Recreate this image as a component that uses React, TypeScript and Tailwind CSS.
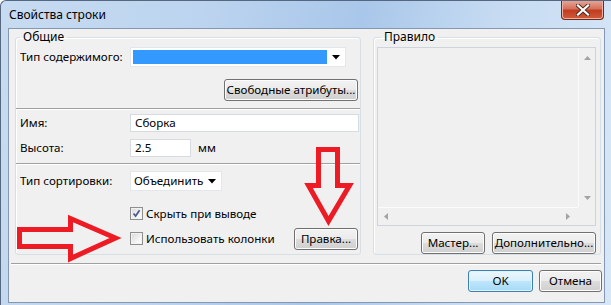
import React from 'react';

function Button({ children, w, primary }: { children: React.ReactNode; w: string; primary?: boolean }) {
  const look = primary
    ? 'border-[#3c7fb1] bg-[linear-gradient(#eaf6fd,#d9f0fc_50%,#bee6fd_50%,#a7d9f5)] shadow-[inset_0_0_0_1px_#e4f3fb]'
    : 'border-[#707070] bg-[linear-gradient(#f2f2f2,#ebebeb_50%,#dddddd_50%,#cfcfcf)] shadow-[inset_0_0_0_1px_#fcfcfc]';
  return (
    <button className={`h-[22px] ${w} shrink-0 whitespace-nowrap rounded-[3px] border ${look} text-[11.6px] leading-none text-black`}>
      {children}
    </button>
  );
}

function DropArrow() {
  return (
    <svg width="8" height="5" viewBox="0 0 8 5">
      <path d="M0 0 H8 L4 4.5 Z" fill="#000" />
    </svg>
  );
}

function Tri({ dir }: { dir: 'up' | 'down' | 'left' | 'right' }) {
  const d = {
    up: 'M0 4 L3.5 0 L7 4 Z',
    down: 'M0 0 H7 L3.5 4 Z',
    left: 'M4 0 V7 L0 3.5 Z',
    right: 'M0 0 V7 L4 3.5 Z',
  }[dir];
  const vertical = dir === 'up' || dir === 'down';
  return (
    <svg width={vertical ? 7 : 4} height={vertical ? 4 : 7} viewBox={vertical ? '0 0 7 4' : '0 0 4 7'}>
      <path d={d} fill="#a3a3a3" />
    </svg>
  );
}

function Checkbox({ checked, label }: { checked?: boolean; label: string }) {
  return (
    <div className="flex items-center gap-[3px]">
      <span className="flex h-[13px] w-[13px] items-center justify-center border border-[#8e8f8f] bg-[linear-gradient(135deg,#d8d8d8,#f7f7f7_70%,#ffffff)] shadow-[inset_0_0_0_1px_#f2f2f2]">
        {checked && (
          <svg width="9" height="9" viewBox="0 0 9 9">
            <path d="M1.5 4.5 L3.6 7 L7.6 1.2" fill="none" stroke="#4a5f8e" strokeWidth="1.8" />
          </svg>
        )}
      </span>
      <span>{label}</span>
    </div>
  );
}

function Separator({ className = '' }: { className?: string }) {
  return <div className={`h-[2px] border-t border-b border-t-[#a0a0a0] border-b-[#ffffff] ${className}`} />;
}

function Input({ value, w }: { value: string; w: string }) {
  return (
    <div className={`flex h-[18px] ${w} items-center border border-[#d6dbe1] bg-white pl-[4px]`}>{value}</div>
  );
}

export default function App() {
  return (
    <div className="relative flex h-[305px] w-[611px] flex-col overflow-hidden rounded-tl-[6px] border-l border-t border-[#55687f] bg-[linear-gradient(100deg,#c7dbf1_0%,#bcd4ef_30%,#a9c7ea_55%,#c6dbf2_75%,#d7e7f7_100%)] pb-[2px] pl-[7px] pr-[6px] font-['Noto_Sans',sans-serif] text-[11.6px] text-black">
      {/* title bar */}
      <div className="flex h-[27px] shrink-0 items-start justify-between">
        <span className="mt-[6px] pl-[1px] text-[12px] leading-[16px]">Свойства строки</span>
        <button className="mr-[1px] mt-[-1px] flex h-[20px] w-[43px] items-center justify-center rounded-b-[4px] border border-t-0 border-[#6e2a1d] bg-[linear-gradient(#e9a99a,#d4735d_45%,#c23c1f_55%,#cf5a3c)] shadow-[inset_0_0_0_1px_#eeb0a2]">
          <svg width="14" height="12" viewBox="0 0 14 12">
            <path d="M2 1.5 L12 10.5 M12 1.5 L2 10.5" stroke="#4b2a22" strokeWidth="4" strokeLinecap="square" />
            <path d="M2 1.5 L12 10.5 M12 1.5 L2 10.5" stroke="#ffffff" strokeWidth="2.2" strokeLinecap="square" />
          </svg>
        </button>
      </div>

      {/* client area */}
      <div className="flex flex-1 flex-col border border-[#8499b1] bg-[#f0f0f0]">
        <div className="ml-[6px] flex items-stretch gap-[12px]">
          <fieldset className="w-[346px] rounded-[3px] border border-[#d5dfe5] pb-[4px] shadow-[inset_1px_1px_0_#ffffff]">
            <legend className="ml-[4px] px-[3px] text-[12px] leading-[16px]">Общие</legend>
            <div className="mt-[2px] flex h-[20px] items-center pl-[4px]">
              <span className="w-[110px]">Тип содержимого:</span>
              <div className="flex h-[20px] w-[216px] items-center border border-[#e3e6ea] bg-white pl-[2px] pr-[5px]">
                <div className="h-[14px] w-[194px] bg-[#3399ff]" />
                <div className="ml-auto flex">
                  <DropArrow />
                </div>
              </div>
            </div>
            <div className="mt-[12px] flex justify-end pr-[2px]">
              <Button w="w-[134px]">Свободные атрибуты...</Button>
            </div>
            <Separator className="mt-[7px]" />
            <div className="mt-[4px] flex h-[18px] items-center pl-[4px]">
              <span className="w-[110px]">Имя:</span>
              <Input value="Сборка" w="w-[229px]" />
            </div>
            <div className="mt-[7px] flex h-[18px] items-center pl-[4px]">
              <span className="w-[110px]">Высота:</span>
              <Input value="2.5" w="w-[61px]" />
              <span className="ml-[7px]">мм</span>
            </div>
            <Separator className="mt-[6px]" />
            <div className="mt-[6px] flex h-[20px] items-center pl-[4px]">
              <span className="w-[110px]">Тип сортировки:</span>
              <div className="flex h-[20px] w-[92px] items-center border border-[#e3e6ea] bg-white pl-[3px] pr-[5px]">
                <span>Объединить</span>
                <div className="ml-auto flex">
                  <DropArrow />
                </div>
              </div>
            </div>
            <div className="mt-[16px] flex h-[13px] items-center pl-[114px]">
              <Checkbox checked label="Скрыть при выводе" />
            </div>
            <div className="mt-[8px] flex h-[22px] items-center justify-between pl-[114px] pr-[2px]">
              <Checkbox label="Использовать колонки" />
              <Button w="w-[64px]">Правка...</Button>
            </div>
          </fieldset>

          <fieldset className="flex w-[228px] flex-col rounded-[3px] border border-[#d5dfe5] pl-[3px] pr-[4px] shadow-[inset_1px_1px_0_#ffffff]">
            <legend className="ml-[4px] px-[3px] text-[12px] leading-[16px]">Правило</legend>
            <div className="mt-[2px] grid h-[179px] grid-cols-[1fr_17px] grid-rows-[1fr_18px] border border-[#cdd4dc] bg-[#f0f0f0]">
              <div />
              <div className="flex flex-col items-center justify-between border-l border-[#fbfbfb] pb-[7px] pt-[8px]">
                <Tri dir="up" />
                <Tri dir="down" />
              </div>
              <div className="flex items-center justify-between border-t border-[#fbfbfb] pl-[6px] pr-[8px]">
                <Tri dir="left" />
                <Tri dir="right" />
              </div>
              <div />
            </div>
            <div className="mt-[6px] flex justify-end gap-[7px]">
              <Button w="w-[64px]">Мастер...</Button>
              <Button w="w-[104px]">Дополнительно...</Button>
            </div>
          </fieldset>
        </div>

        <Separator className="ml-[2px] mr-[3px] mt-[8px]" />

        <div className="mt-[5px] flex justify-end gap-[6px] pr-[2px]">
          <Button w="w-[65px]" primary>
            OK
          </Button>
          <Button w="w-[63px]">Отмена</Button>
        </div>
      </div>

      {/* red annotation arrows */}
      <svg className="pointer-events-none absolute left-[-1px] top-[-1px]" width="611" height="305" viewBox="0 0 611 305">
        <path
          d="M318.5 149.5 H337.5 V185.5 H349.5 L328.5 221 L308.5 185.5 H318.5 Z"
          fill="none"
          stroke="#ed1c24"
          strokeWidth="5"
          strokeLinejoin="miter"
        />
        <path
          d="M19.5 229.5 H70.5 V218.5 L115.5 238 L70.5 258.5 V246.5 H19.5 Z"
          fill="none"
          stroke="#ed1c24"
          strokeWidth="5"
          strokeLinejoin="miter"
        />
      </svg>
    </div>
  );
}
